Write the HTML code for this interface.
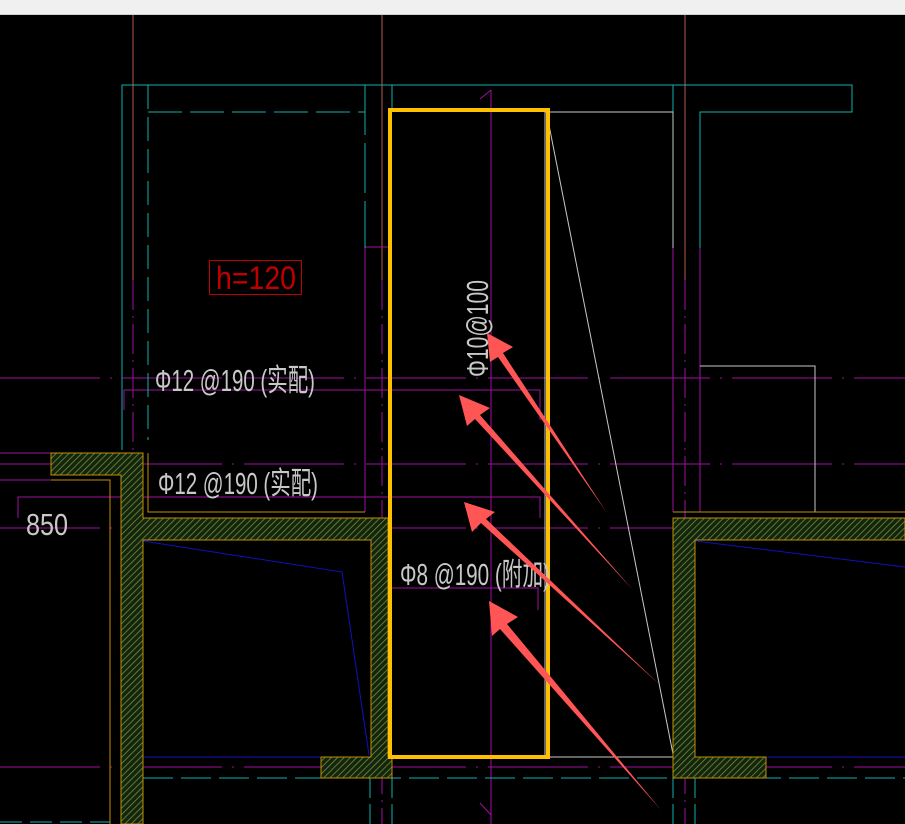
<!DOCTYPE html>
<html><head><meta charset="utf-8"><style>
html,body{margin:0;padding:0;background:#000;width:905px;height:824px;overflow:hidden}
svg{display:block}
text{font-family:"Liberation Sans","Noto Sans CJK SC",sans-serif;}
</style></head><body>
<svg width="905" height="824" viewBox="0 0 905 824" xmlns="http://www.w3.org/2000/svg">
<defs>
<pattern id="h" width="4.5" height="4.5" patternUnits="userSpaceOnUse" patternTransform="rotate(45)">
<rect width="5" height="5" fill="#16240e"/>
<line x1="0" y1="0" x2="0" y2="5" stroke="#6c9a3c" stroke-width="1.5"/>
</pattern>
</defs>
<rect x="0" y="0" width="905" height="14" fill="#f0f0f0"/>
<line x1="0" y1="14.5" x2="905" y2="14.5" stroke="#cfcfcf"/>
<g fill="none" stroke-width="1">
<line x1="133" y1="15" x2="133" y2="280" stroke="#b85a50"/>
<line x1="382" y1="15" x2="382" y2="280" stroke="#b85a50"/>
<line x1="685" y1="15" x2="685" y2="280" stroke="#b85a50"/>
<g stroke="#a010a0">
<line x1="133" y1="280" x2="133" y2="824" stroke-dasharray="30 6 2 6"/>
<line x1="382" y1="280" x2="382" y2="824" stroke-dasharray="30 6 2 6"/>
<line x1="685" y1="280" x2="685" y2="824" stroke-dasharray="30 6 2 6"/>
<line x1="0" y1="378" x2="905" y2="378" stroke-dasharray="100 10 2 10"/>
<line x1="0" y1="464" x2="905" y2="464" stroke-dasharray="100 10 2 10"/>
<line x1="0" y1="528" x2="905" y2="528" stroke-dasharray="100 10 2 10"/>
<line x1="0" y1="767" x2="905" y2="767" stroke-dasharray="100 10 2 10"/>
<polyline points="124,410 124,390 540,390 540,420"/>
<polyline points="18,518 18,497 540,497 540,518"/>
<polyline points="381,608 381,588 538,588 538,610"/>
<line x1="491" y1="90" x2="491" y2="824"/>
<line x1="480" y1="99" x2="491" y2="90"/>
<line x1="0" y1="453" x2="51" y2="453"/>
<line x1="0" y1="480" x2="51" y2="480"/>
<polyline points="365,512 365,247 388,247"/>
<line x1="673" y1="248" x2="673" y2="512"/>
<line x1="700" y1="248" x2="700" y2="512"/>
<line x1="480" y1="803" x2="491" y2="815"/>
</g>
<g stroke="#10b0b0">
<polyline points="122,450 122,85 852,85 852,112 700,112 700,248"/>
<line x1="392" y1="85" x2="392" y2="112"/>
<line x1="673" y1="85" x2="673" y2="112"/>
<line x1="148" y1="85" x2="148" y2="440" stroke-dasharray="24 8"/>
<line x1="148" y1="112" x2="365" y2="112" stroke-dasharray="34 8"/>
<line x1="365" y1="85" x2="365" y2="248" stroke-dasharray="50 8"/>
<line x1="143" y1="778" x2="905" y2="778" stroke-dasharray="30 8"/>
<line x1="0" y1="822" x2="110" y2="822" stroke-dasharray="22 8"/>
<line x1="370" y1="778" x2="370" y2="824" stroke-dasharray="20 6"/>
<line x1="392" y1="778" x2="392" y2="824" stroke-dasharray="20 6"/>
<line x1="673" y1="778" x2="673" y2="824" stroke-dasharray="20 6"/>
<line x1="695" y1="778" x2="695" y2="824" stroke-dasharray="20 6"/>
</g>
<g stroke="#c8c8c8">
<polyline points="545,112 673,112 673,248"/>
<line x1="545" y1="112" x2="545" y2="757"/>
<line x1="549" y1="757" x2="673" y2="757"/>
<line x1="547" y1="115" x2="673" y2="754"/>
<polyline points="700,366 815,366 815,512"/>
</g>
<g stroke="#1010c0">
<polyline points="143,541 342,572 369,755"/>
<line x1="143" y1="757" x2="321" y2="757"/>
<line x1="695" y1="541" x2="905" y2="567"/>
<line x1="766" y1="757" x2="905" y2="757"/>
</g>
</g>
<g fill="url(#h)" stroke="#c09000" stroke-width="1">
<polygon points="51,453 143,453 143,518 388,518 388,757 392,757 392,778 321,778 321,757 371,757 371,540 143,540 143,824 121,824 121,475 51,475"/>
<polygon points="673,518 905,518 905,540 695,540 695,757 766,757 766,778 673,778"/>
</g>
<g stroke="#c09000" fill="none">
<polyline points="51,480 110,480 110,824"/>
<polyline points="148,453 148,512 365,512"/>
<line x1="673" y1="512" x2="905" y2="512"/>
</g>
<rect x="390" y="110" width="158" height="647" fill="none" stroke="#ffc000" stroke-width="4"/>
<rect x="209.5" y="260.5" width="92" height="34" fill="none" stroke="#c00000"/>
<text x="216" y="289" fill="#c00000" font-size="32" textLength="80" lengthAdjust="spacingAndGlyphs">h=120</text>
<g fill="#c8c8c8" font-size="31">
<text x="155" y="391" textLength="160" lengthAdjust="spacingAndGlyphs">Φ12 @190 (实配)</text>
<text x="158" y="494" textLength="160" lengthAdjust="spacingAndGlyphs">Φ12 @190 (实配)</text>
<text x="26" y="535" textLength="42" lengthAdjust="spacingAndGlyphs">850</text>
<text x="400" y="585" textLength="150" lengthAdjust="spacingAndGlyphs">Φ8 @190 (附加)</text>
<text transform="translate(488,377) rotate(-90)" x="0" y="0" textLength="97" lengthAdjust="spacingAndGlyphs">Φ10@100</text>
</g>
<g fill="#ff5555">
<polygon points="487,333 513,347 503,353 607,513 498,357 490,362"/>
<polygon points="459,395 490,408 480,415 633,590 475,419 467,426"/>
<polygon points="464,502 495,512 486,519 660,685 481,523 472,532"/>
<polygon points="489,601 518,617 507,624 661,810 500,629 492,636"/>
</g>
</svg>
</body></html>
